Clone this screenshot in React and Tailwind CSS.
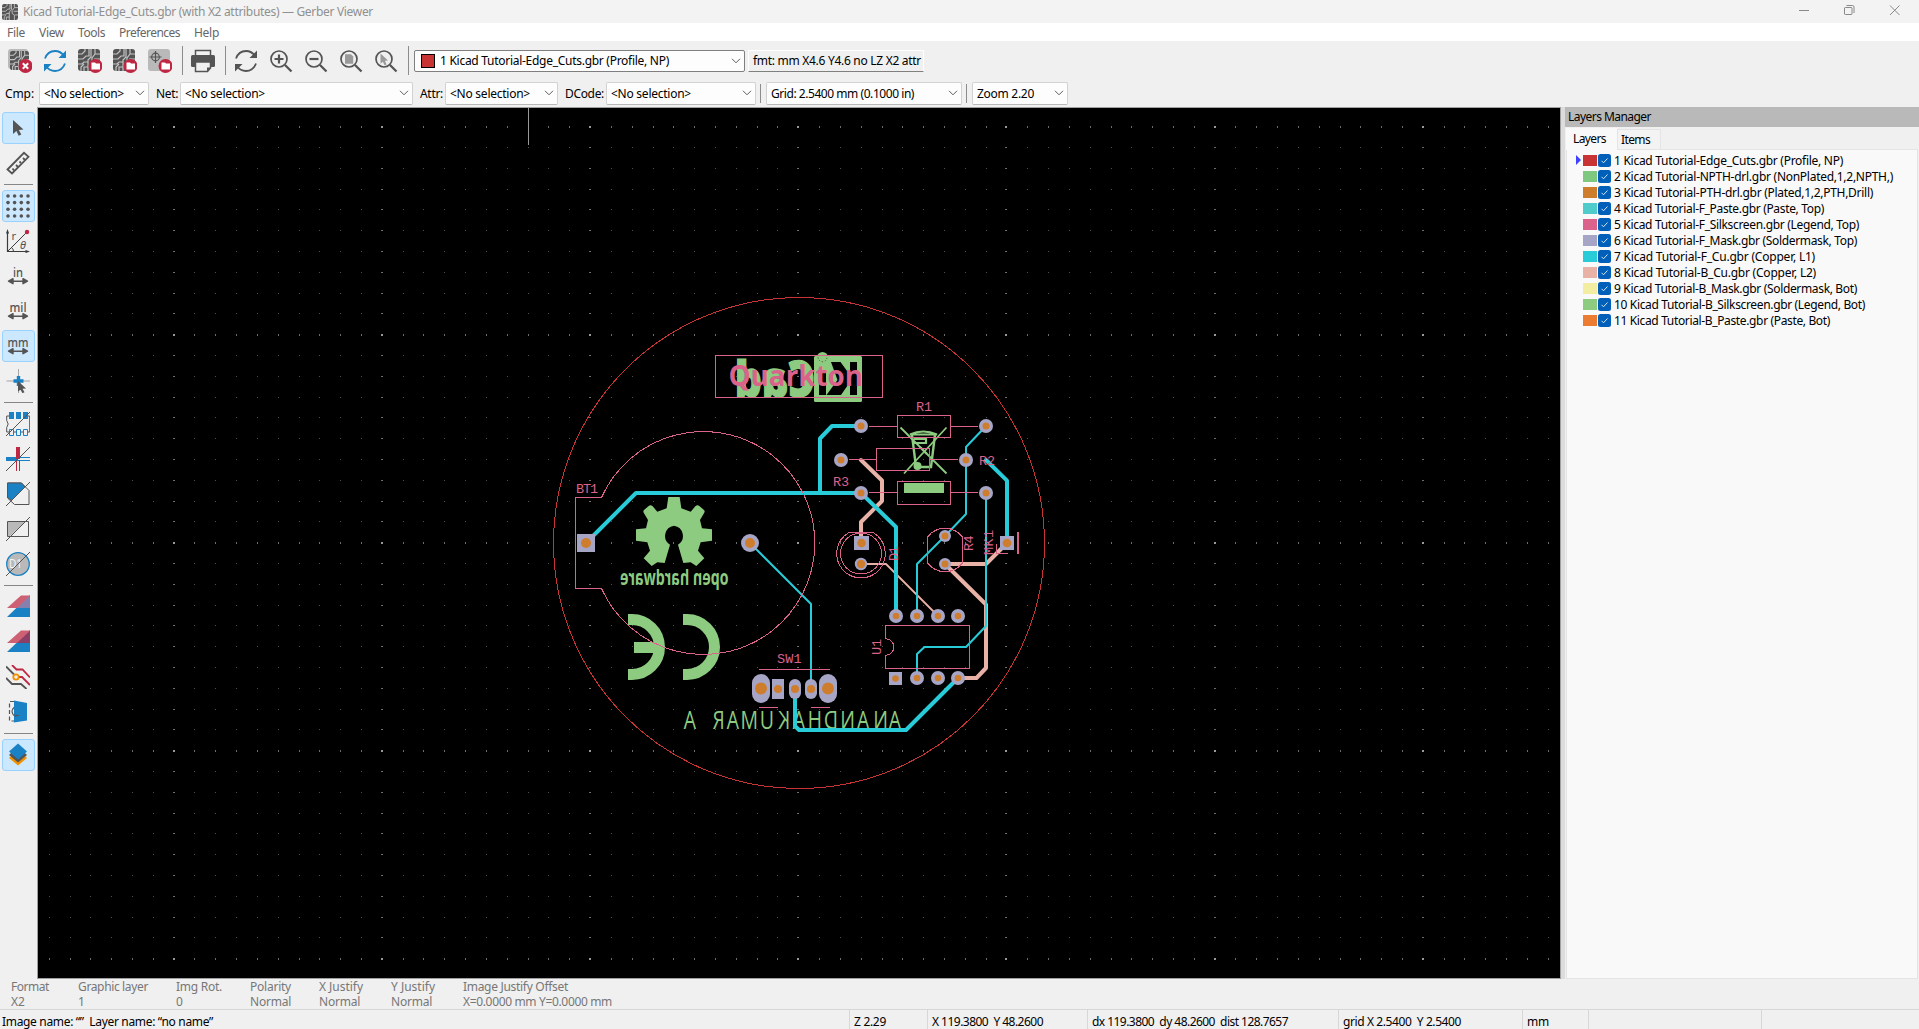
import React, { useLayoutEffect, useRef, useState } from 'react';

/* Text run spread to an exact advance width, like the native toolkit's hinted metrics. */
function Fit({ w, children, className = '' }) {
  const ref = useRef(null);
  const [ls, setLs] = useState(0);
  useLayoutEffect(() => {
    const el = ref.current;
    if (!w || !el) return;
    const natural = el.getBoundingClientRect().width - ls * children.length;
    setLs((w - natural) / children.length);
  }, [w, children]);
  return (
    <span ref={ref} className={`inline-block whitespace-pre ${className}`} style={{ letterSpacing: `${ls}px` }}>
      {children}
    </span>
  );
}

const DARK = '#545454';
const BLUE = '#1a81c4';
const RED = '#bf2641';

const BoardChip = ({ x = 0, y = 0, s = 22 }) => (
  <g transform={`translate(${x} ${y}) scale(${s / 22})`}>
    <rect width="22" height="22" rx="3" fill={DARK} />
    <path d="M0 5h4l3-3V0M0 10h5l3-3h3V0M13 0v8l-3 3v11M0 15h4l2-2h4M3 22v-4l3-3M17 0v5M22 5h-5l-3 4v4l3 2v7M22 10h-6M22 15h-4M6 22v-4h4" stroke="#c4c4c4" strokeWidth="1.2" fill="none" />
  </g>
);
const Badge = ({ children }) => (
  <g>
    <circle cx="17.5" cy="17" r="7" fill={RED} />
    {children}
  </g>
);
const FolderMark = () => <path d="M13.500 13.500h3.500l1 1h4v6h-8.500z" fill="#fff" />;
const Lens = ({ children }) => (
  <g>
    <circle cx="10" cy="10" r="8" fill="none" stroke={DARK} strokeWidth="1.7" />
    <path d="M16 16l6.5 6.5" stroke={DARK} strokeWidth="2.3" />
    {children}
  </g>
);
const Cycle = ({ c }) => (
  <g fill="none" stroke={c} strokeWidth="1.8">
    <path d="M2 9.5C4 4 8 2 12 2c4 0 7 2 9 5M22 14.500c-2 5.500-6 7.500-10 7.500-4 0-7-2-9-5" />
    <path d="M23 1.500v7.500h-7.500zM1 22.500v-7.500h7.500z" fill={c} stroke="none" />
  </g>
);

const topIcons = {
  clear: (
    <g>
      <rect x="0" y="0" width="20" height="20" rx="3" fill="#b9b9b9" />
      <BoardChip x={2} y={2} s={19} />
      <Badge><path d="M14.800 14.300l5.400 5.400M20.200 14.300l-5.400 5.400" stroke="#fff" strokeWidth="2" /></Badge>
    </g>
  ),
  reload: <Cycle c={BLUE} />,
  openAuto: <g><BoardChip /><Badge><FolderMark /></Badge></g>,
  openGerber: <g><BoardChip /><Badge><FolderMark /></Badge></g>,
  openDrill: (
    <g>
      <rect width="22" height="22" rx="3" fill="#b9b9b9" />
      <circle cx="7.500" cy="8" r="3.800" fill="none" stroke={DARK} strokeWidth="1.200" />
      <path d="M7.500 2v12M1.500 8h12" stroke={DARK} strokeWidth="1.200" />
      <Badge><FolderMark /></Badge>
    </g>
  ),
  print: (
    <g>
      <path d="M4.500 6V1.500h15V6" fill="#f0f0f0" stroke={DARK} strokeWidth="1.500" />
      <rect x="0" y="6" width="24" height="12" rx="1.500" fill={DARK} />
      <path d="M4.500 13h15v6l-3 3.500h-12z" fill="#f0f0f0" stroke={DARK} strokeWidth="1.500" />
      <path d="M16 22.500v-4h4z" fill={DARK} />
    </g>
  ),
  refresh: <Cycle c={DARK} />,
  zoomIn: <Lens><path d="M10 5.500v9M5.500 10h9" stroke={DARK} strokeWidth="2.200" /></Lens>,
  zoomOut: <Lens><path d="M5.500 10h9" stroke={DARK} strokeWidth="2.200" /></Lens>,
  zoomFit: <Lens><path d="M6 5.200h6l2.200 2.200v7.400H6z" fill="#9a9a9a" /></Lens>,
  zoomSel: <Lens><path d="M6.500 4.500l7.500 7-3 .3 1.500 3.600-2 .8-1.600-3.500-2.400 2z" fill="#9a9a9a" /></Lens>,
};

const ToolIcon = ({ name }) => (
  <svg className="block h-6 w-6 shrink-0" viewBox="0 0 24 24">{topIcons[name]}</svg>
);
const VSep = ({ className = '' }) => <div className={`w-px shrink-0 bg-[#8c8c8c] ${className}`} />;

const Arrows = () => <path d="M4 17.200h16M7 14.700l-4.500 2.500 4.500 2.500zM17 14.700l4.500 2.500-4.500 2.500z" stroke={DARK} strokeWidth="1.400" fill={DARK} strokeLinejoin="round" />;
const Unit = ({ t, w }) => (
  <g>
    <text x="12" y="12.500" textAnchor="middle" textLength={w} lengthAdjust="spacingAndGlyphs" fontSize="12.500" fontWeight="500" fill={DARK} fontFamily="'Noto Sans'">{t}</text>
    <Arrows />
  </g>
);
const Slash = () => <path d="M0 24L24 0" stroke={DARK} strokeWidth="1" />;

const sideIcons = {
  select: <path d="M7 4l10.500 9.600-4.600.3 2.400 4.600-2.600 1.300-2.300-4.800L7 18z" fill={DARK} />,
  ruler: (
    <g fill="none" stroke={DARK} strokeWidth="1.800">
      <path d="M1.500 18.500L18 1.800l4.500 4L6 22.500z" />
      <path d="M6.500 17.500l1.500 1.800M10 14l2 2M13.500 10.500l1.500 1.500M17 7l2 2" />
    </g>
  ),
  grid: (
    <g fill={DARK}>
      {[2, 8.600, 15.300, 22].map((y) => [2, 8.600, 15.300, 22].map((x) => <circle key={`${x}-${y}`} cx={x} cy={y} r="1.800" />))}
    </g>
  ),
  polar: (
    <g stroke="#3c3c3c" fill="none">
      <path d="M1.500 3v19.500H21" strokeWidth="1.200" />
      <path d="M1.500 0l1.600 4.500H0zM24 22.500l-4.500-1.600v3.200z" fill="#3c3c3c" stroke="none" />
      <path d="M2 22L20 4M5.500 18.500q2 1.500 2 4" strokeWidth="1" />
      <circle cx="21" cy="3" r="2.200" fill={RED} stroke="none" />
      <text x="5.500" y="11" fontSize="11" fill={DARK} stroke="none" fontFamily="'Noto Sans'">r</text>
      <text x="14" y="20" fontSize="11" fontStyle="italic" fill={DARK} stroke="none" fontFamily="'Noto Sans'">θ</text>
    </g>
  ),
  inch: <Unit t="in" w={10} />,
  mil: <Unit t="mil" w={17} />,
  mm: <Unit t="mm" w={21} />,
  cursor: (
    <g>
      <path d="M12.500 0v24M.500 12H24" stroke="#a5a5a5" />
      <path d="M12.500 7v10M7.500 12h10" stroke={BLUE} strokeWidth="3.400" />
      <path d="M12 12l8 7.500-3.500.2 2 3.500-2 1-2-3.500L12 22.500z" fill={DARK} />
    </g>
  ),
  pads: (
    <g>
      <path d="M3 4H.700v4.500q3 3.500 0 7V20h23V4H21" fill="none" stroke={DARK} />
      <path d="M3 0h5v7H3zM10 0h5v7h-5zM17 0h5v7h-5z" fill={BLUE} />
      <path d="M3.500 17.500h4v6h-4zM10.500 17.500h4v6h-4zM17.500 17.500h4v6h-4z" fill="#f0f0f0" stroke={BLUE} />
      <Slash />
    </g>
  ),
  lines: (
    <g>
      <path d="M0 12h12" stroke={BLUE} strokeWidth="4" />
      <path d="M12 10.500h12M12 13.500h12" stroke={BLUE} />
      <path d="M12 0v12" stroke={RED} strokeWidth="4" />
      <path d="M10.500 13v11M13.500 13v11" stroke={RED} />
      <Slash />
    </g>
  ),
  polys: (
    <g>
      <path d="M1.500 1h14L23 8.500v14H8.500L1.500 16z" fill="#f0f0f0" stroke={DARK} />
      <path d="M1.500 1h14l3.500 4L5.500 18.500l-4-3z" fill={BLUE} stroke={DARK} />
      <Slash />
    </g>
  ),
  neg: (
    <g>
      <path d="M1.500 4.500h21v15h-21z" fill="#f0f0f0" stroke={DARK} />
      <path d="M2 5h17L4 19H2z" fill="#b9b9b9" />
      <Slash />
    </g>
  ),
  dcodes: (
    <g>
      <circle cx="12" cy="12" r="11.300" fill="#b9b9b9" stroke={BLUE} strokeWidth="1.300" />
      <text x="3" y="16" fontSize="13" textLength="13" lengthAdjust="spacingAndGlyphs" fill="#f4f4f4" fontFamily="'Noto Sans'">D1</text>
      <Slash />
    </g>
  ),
  diff: (
    <g>
      <path d="M1 22L24 0v22z" fill={BLUE} />
      <path d="M1 13L15 .500h9V13z" fill="#cd6173" />
      <path d="M11 13L24 .800V13z" fill="#8580ad" />
    </g>
  ),
  xor: (
    <g>
      <path d="M1 22L24 0v22z" fill={BLUE} />
      <path d="M1 13L15 .500h9V13z" fill="#cd6173" />
      <path d="M11 13L24 .800V13z" fill="#8b3f66" />
    </g>
  ),
  contrast: (
    <g fill="none" strokeWidth="1.800">
      <path d="M0 1.500l8 8M0 13l6 6h9l5.500 5" stroke={DARK} />
      <path d="M6 0l4.500 4.500h6L24 12.500M12 12h4l8 8" stroke={RED} />
      <circle cx="10" cy="12" r="2.700" stroke="#f29100" fill="#f0f0f0" />
    </g>
  ),
  flip: (
    <g>
      <path d="M8 1.500H3.500v19.500H8" fill="none" stroke={DARK} strokeWidth="1.200" strokeDasharray="4 2.500" />
      <path d="M8.500 7q-5 4.500 0 9" fill="none" stroke={DARK} strokeWidth="1.200" />
      <path d="M8 .500l13 2.500v17.500L8 22.500z" fill={BLUE} />
      <path d="M8 14.500l6 .8-5 1.500z" fill={DARK} />
    </g>
  ),
  layers: (
    <g>
      <path d="M12 6.500l9 8.500-9 7.500L3 15z" fill="#f29100" />
      <path d="M12 3.500l9 8.500-9 7.500L3 12z" fill={DARK} />
      <path d="M12 .500l9 8-9 8-9-8z" fill={BLUE} />
    </g>
  ),
};

const sideTools = [
  ['select', true], ['ruler'], null,
  ['grid', true], ['polar'], ['inch'], ['mil'], ['mm', true], ['cursor'], null,
  ['pads'], ['lines'], ['polys'], ['neg'], ['dcodes'], null,
  ['diff'], ['xor'], ['contrast'], ['flip'], null,
  ['layers', true],
];

function SideBar() {
  return (
    <div className="flex w-[37px] shrink-0 flex-col pt-[4px] pl-[2px]">
      {sideTools.map((t, i) =>
        t ? (
          <div key={i} className="h-[35px] shrink-0 pt-px">
            <div className={`flex h-8 w-[33px] items-center rounded-[3px] border pl-[3px] ${t[1] ? 'border-[#99d1ff] bg-[#cce8ff]' : 'border-transparent'}`}>
              <svg className="block h-6 w-6" viewBox="0 0 24 24">{sideIcons[t[0]]}</svg>
            </div>
          </div>
        ) : (
          <div key={i} className="h-2 shrink-0 pt-[3px] pl-[2px]"><div className="h-px w-[29px] bg-[#868686]" /></div>
        )
      )}
    </div>
  );
}

function Combo({ w, tw, children, swatch }) {
  return (
    <div className={`flex shrink-0 items-center rounded-[2px] border bg-[#fdfdfd] pl-[4px] pr-[3px] ${swatch ? 'h-[22px] border-[#7f7f7f]' : 'h-[23px] border-[#d2d2d2] border-b-[#b8b8b8]'}`} style={{ width: w }}>
      {swatch && <div className="mr-[5px] ml-[2px] h-[14px] w-[14px] border border-black bg-[#c83434]" />}
      <Fit w={tw}>{children}</Fit>
      <svg className="ml-auto h-[6px] w-[10px]" viewBox="0 0 10 6"><path d="M1 .800l4 4 4-4" fill="none" stroke="#5c5c5c" /></svg>
    </div>
  );
}

const layers = [
  ['#c83434', '1 Kicad Tutorial-Edge_Cuts.gbr (Profile, NP)', 229],
  ['#7fc87f', '2 Kicad Tutorial-NPTH-drl.gbr (NonPlated,1,2,NPTH,)', 279],
  ['#ce7d2c', '3 Kicad Tutorial-PTH-drl.gbr (Plated,1,2,PTH,Drill)', 259],
  ['#4fcbcb', '4 Kicad Tutorial-F_Paste.gbr (Paste, Top)', 210],
  ['#db628b', '5 Kicad Tutorial-F_Silkscreen.gbr (Legend, Top)', 245],
  ['#a7a5c6', '6 Kicad Tutorial-F_Mask.gbr (Soldermask, Top)', 243],
  ['#28ccd9', '7 Kicad Tutorial-F_Cu.gbr (Copper, L1)', 201],
  ['#e8b2a7', '8 Kicad Tutorial-B_Cu.gbr (Copper, L2)', 202],
  ['#f2eda1', '9 Kicad Tutorial-B_Mask.gbr (Soldermask, Bot)', 243],
  ['#8dcb81', '10 Kicad Tutorial-B_Silkscreen.gbr (Legend, Bot)', 251],
  ['#ed7c33', '11 Kicad Tutorial-B_Paste.gbr (Paste, Bot)', 216],
];

function LayersPanel() {
  return (
    <div className="flex w-[355px] shrink-0 flex-col">
      <div className="flex h-5 items-center bg-[#b9b9b9] pb-[2px] pl-[3px]"><Fit w={83}>Layers Manager</Fit></div>
      <div className="flex h-[22px] items-end pl-px">
        <div className="z-10 -mb-px flex h-[22px] w-[51px] items-center bg-[#f9f9f9] pb-[2px] pl-[7px]"><Fit w={33}>Layers</Fit></div>
        <div className="flex h-5 w-[44px] items-center border border-b-0 border-[#e4e4e4] bg-[#f3f3f3] pl-[3px]"><Fit w={29}>Items</Fit></div>
      </div>
      <div className="mr-[2px] ml-px flex-1 border border-[#e4e4e4] bg-[#f9f9f9] pt-[2px] pl-[9px]">
        {layers.map(([c, name, w], i) => (
          <div key={name} className="flex h-4 items-center">
            <svg className="mr-[2px] h-[10px] w-[5px]" viewBox="0 0 5 10">{i === 0 && <path d="M0 0l5 5-5 5z" fill="#4040ff" />}</svg>
            <div className="h-[11px] w-[14px]" style={{ backgroundColor: c }} />
            <svg className="ml-px h-[13px] w-[13px]" viewBox="0 0 13 13"><rect width="13" height="13" rx="2.500" fill="#005fb8" /><path d="M3.500 6.800l2 2 4-4.300" fill="none" stroke="#d5e6f5" strokeWidth="1" /></svg>
            <Fit w={w} className="ml-[3px]">{name}</Fit>
          </div>
        ))}
      </div>
    </div>
  );
}

/* Grid points: every tenth row and column is emphasised. */
function buildGrid() {
  let minor = '', mid = '', major = '';
  for (let i = -6; i <= 66; i++) {
    const x = Math.floor(174.150 + 20.820 * i);
    for (let j = 0; j <= 40; j++) {
      const y = Math.floor(126.600 + 20.800 * j);
      const mx = i % 10 === 0, my = j % 10 === 0;
      if (mx && my) major += `M${x - 1} ${y}h2v2h-2z`;
      else if (mx) mid += `M${x - 1} ${y}h2v1h-2z`;
      else if (my) mid += `M${x} ${y}h1v2h-1z`;
      else minor += `M${x} ${y}h1v1h-1z`;
    }
  }
  return { minor, mid, major };
}
const gridPaths = buildGrid();

const CU = '#28ccd9', BCU = '#e8b2a7', MASK = '#a7a5c6', SILK = '#db628b', BSILK = '#8dcb81', DRILL = '#ce7d2c';

const roundPads = [
  [750, 543, 9, 5], [861, 426, 7, 3.500], [986, 426, 7, 3.500], [841, 460, 7, 3.500], [966, 460, 7, 3.500],
  [861, 493, 7, 3.500], [986, 493, 7, 3.500], [861, 564, 6.200, 4.200], [945, 536, 6, 3.500], [945, 564, 6, 3.500],
  [896, 616, 7, 3.300], [917, 616, 7, 3.300], [938, 616, 7, 3.300], [958, 616, 7, 3.300],
  [917, 678, 7, 3.300], [938, 678, 7, 3.300], [958, 678, 7, 3.300],
];
const boxPads = [
  [577, 534, 18, 18, 0, 5], [854, 536, 15, 14, 0, 4.300], [1000, 536, 14, 14, 0, 4.300], [889, 672, 13, 13, 0, 3.300],
  [752, 674, 18, 29, 9, 6], [772, 679, 12, 20, 0, 4], [789, 679, 12, 20, 6, 4], [805, 679, 12, 20, 6, 4], [819, 674, 18, 29, 9, 6],
];

const Label = ({ x, y, w, rot, children }) => (
  <text transform={rot ? `translate(${x} ${y}) rotate(-90)` : `translate(${x} ${y})`} textLength={w} fontSize="13.500" fill={SILK} fontFamily="'Liberation Mono', monospace">{children}</text>
);

/* Stroke-font legend: [glyph, distance from the right-hand origin] */
const SIGN_SCALE = 0.78;
const signGlyphs = [
  ['A', 0], ['N', 13], ['A', 31.700], ['N', 46], ['D', 63], ['H', 79], ['A', 96], ['K', 110.700], ['U', 127],
  ['M', 143], ['A', 162], ['R', 176.300], [' ', 190], ['A', 205],
];

const gearHalf = 'M0 -114H-17L-22 -80L-50 -70L-64 -86Q-70 -92 -76 -87L-90 -75Q-94 -71 -90 -65L-78 -45L-84 -20L-114 -17V17L-80 22L-72 47L-91 70L-67 93L-50 82L-28 84L-12 29A31 31 0 0 1 0 -28Z';

function BoardView() {
  return (
    <svg className="block h-[870px] w-[1522px]" viewBox="38 108 1522 870">
      <rect x="38" y="108" width="1522" height="870" fill="#000" />
      <g shapeRendering="crispEdges">
        <path d={gridPaths.minor} fill="#505050" />
        <path d={gridPaths.mid} fill="#6e6e6e" />
        <path d={gridPaths.major} fill="#999" />
        <path d="M528 108h1v37h-1z" fill="#999" />
      </g>

      {/* bottom silkscreen */}
      <g fill={BSILK}>
        <rect x="814" y="356" width="48" height="46" rx="1.500" />
        <circle cx="822.500" cy="357.500" r="5.500" />
        <path d="M818 357.500q1 4 4.500 4.200t4.500-4.200" fill="none" stroke="#33492f" strokeDasharray="1 2" />
        <path d="M819 370h7v25h-7zM850 362h7v33h-7zM831 362h9.500l9.500 13v7l-9 13h-14.500l11-15z" fill="#000" />
        <text transform="translate(815 396.500) scale(-1 1)" fontSize="49" fontWeight="800" fontFamily="'Open Sans'" textLength="80" lengthAdjust="spacingAndGlyphs" stroke={BSILK} strokeWidth="1.500">Cad</text>
        <g transform="translate(674 535) scale(.3333)">
          <path d={gearHalf} />
          <path d={gearHalf} transform="scale(-1 1)" />
        </g>
        <text transform="translate(728.500 585) scale(-1 1)" fontSize="20.500" fontWeight="700" fontFamily="'Open Sans'" textLength="108.500" lengthAdjust="spacingAndGlyphs">open hardware</text>
        <g fill="none" stroke={BSILK} strokeWidth="11">
          <path d="M628 619.500h4a27.500 27.500 0 0 1 0 55h-4M634 647.500h24M683 619.500h4a27.500 27.500 0 0 1 0 55h-4" />
        </g>
        <text transform={`translate(901 729) scale(-${SIGN_SCALE} 1)`} x={signGlyphs.map(([, u]) => (u / SIGN_SCALE).toFixed(1)).join(' ')} fontSize="25" fontFamily="'Open Sans'" xmlSpace="preserve">{signGlyphs.map(([c]) => c).join('')}</text>
        <rect x="904" y="483" width="40" height="10" />
        <g fill="none" stroke={BSILK} strokeWidth="1.800">
          <path d="M900.500 427.500l46 46M946.500 427.500l-42.500 46" />
          <path d="M912 435l4 32h15l4-32" strokeWidth="2.400" />
          <path d="M910 434.500q13-6 27 0zM913 443h13v-4h-12M920 447l7 7" strokeWidth="2.200" />
        </g>
        <circle cx="917.500" cy="466" r="4" />
      </g>

      {/* bottom copper */}
      <g fill="none" stroke={BCU} strokeWidth="4" strokeLinejoin="round" strokeLinecap="round">
        <path d="M861 460l21 20.500V501l-21 21v21M945 564l41 40.500V668l-9.500 10H958M945 564h41l21-21" />
        <path d="M861 564h25l52 52" strokeWidth="1.800" />
      </g>

      {/* top copper */}
      <g fill="none" stroke={CU} strokeWidth="4" strokeLinejoin="round" strokeLinecap="round">
        <path d="M586 543l50-50h225l35 34v89M820 493v-54.500L832 426h29M986 460l21 20.700V543M795 688v38l4 4h107l52-52" />
        <path d="M986 426l-20 21v67l-21 22-28 28v52M986 493v133l-20 21h-41.500l-7.500 7v24M750 543l61 61v84" strokeWidth="2" />
      </g>

      {/* pads */}
      <g fill={MASK}>
        {roundPads.map(([x, y, r]) => <circle key={`${x}-${y}`} cx={x} cy={y} r={r} />)}
        {boxPads.map(([x, y, w, h, r]) => <rect key={`${x}-${y}`} x={x} y={y} width={w} height={h} rx={r} />)}
      </g>

      {/* top silkscreen */}
      <g fill="none" stroke={SILK} strokeWidth="1" shapeRendering="crispEdges">
        <path d="M601.500 497.500h-26v91h26A111.500 111.500 0 1 0 601.500 497.500" />
        <path d="M715.500 355.500h167v42h-167zM897.500 415.500h53v22h-53zM876.500 448.500h53v22h-53zM897.500 481.500h53v23h-53z" />
        <path d="M869 426.500h28M951 426.500h27M849 459.500h27M930 459.500h28M869 492.500h28M951 492.500h27" />
        <circle cx="861" cy="553.500" r="20.500" />
        <path d="M849 532.500h24A24.300 24.300 0 1 1 849 532.500" />
        <path d="M927.500 537A22 22 0 0 1 962.500 537v26A22 22 0 0 1 927.500 563z" />
        <path d="M996.500 544v9.500H1008" />
        <path d="M1018 532v21.500" strokeWidth="2" />
        <path d="M885.500 638.700v-13.200h84v43h-84v-13.200a8.300 8.300 0 0 0 0-16.600" />
        <path d="M759 669.500h71M759 707.500h19M810.500 707.500h19" />
      </g>
      <Label x={916} y={411} w={16}>R1</Label>
      <Label x={979} y={464.500} w={16}>R2</Label>
      <Label x={833} y={485.500} w={16}>R3</Label>
      <Label x={576} y={493} w={22}>BT1</Label>
      <Label x={777} y={663} w={24.500}>SW1</Label>
      <Label x={898} y={561} w={15} rot>D1</Label>
      <Label x={973} y={551} w={15.500} rot>R4</Label>
      <Label x={993} y={555} w={25} rot>MK1</Label>
      <Label x={881} y={655} w={16} rot>U1</Label>
      <text x="728.500" y="385.500" fontSize="29" fontWeight="700" fill={SILK} fontFamily="'Open Sans'" textLength="134.500" lengthAdjust="spacingAndGlyphs">Quarkton</text>

      <g fill={DRILL}>
        {roundPads.map(([x, y, , d]) => <circle key={`${x}-${y}`} cx={x} cy={y} r={d} />)}
        {boxPads.map(([x, y, w, h, , d]) => <circle key={`${x}-${y}`} cx={x + w / 2} cy={y + h / 2} r={d} />)}
      </g>
      <circle cx="799" cy="543" r="245.500" fill="none" stroke="#c83434" strokeWidth="1" shapeRendering="crispEdges" />
    </svg>
  );
}

const info = [
  ['Format', 38, 'X2', 14, 67], ['Graphic layer', 70, '1', 6, 98], ['Img Rot.', 46, '0', 7, 74], ['Polarity', 41, 'Normal', 41, 69],
  ['X Justify', 44, 'Normal', 41, 72], ['Y Justify', 44, 'Normal', 41, 72], ['Image Justify Offset', 105, 'X=0.0000 mm Y=0.0000 mm', 149, 200],
];
const status = [
  ['Z 2.29', 32, 78], ['X 119.3800  Y 48.2600', 111, 160], ['dx 119.3800  dy 48.2600  dist 128.7657', 196, 251],
  ['grid X 2.5400  Y 2.5400', 118, 184], ['mm', 22, 66], ['', 0, 173], ['', 0, 157],
];

export default function App() {
  return (
    <div className="flex h-[1029px] w-[1919px] flex-col overflow-hidden bg-[#f0f0f0] font-['Noto_Sans',sans-serif] text-[12px] leading-[15px] text-black">
      <div className="flex h-[23px] shrink-0 items-center bg-[#f3f3f3] pl-[2px] text-[#909090]">
        <svg className="mr-[5px] h-4 w-4" viewBox="0 0 22 22"><BoardChip /></svg>
        <Fit w={350}>Kicad Tutorial-Edge_Cuts.gbr (with X2 attributes) — Gerber Viewer</Fit>
        <svg className="ml-auto h-[23px] w-[140px]" viewBox="0 0 140 23" fill="none" stroke="#8a8a8a">
          <path d="M20 10.500h10M111 5.500l9.500 9.500M120.500 5.500L111 15" />
          <path d="M66.500 7.500h6q.5 0 .5.500v6q0 .5-.5.500h-6q-1 0-1-.5v-6q0-.5 1-.5zM67.500 5.500h6q1.500 0 1.500 1.500v6" />
        </svg>
      </div>
      <div className="flex h-[18px] shrink-0 items-center gap-[14px] bg-white pl-[7px] text-[#666]">
        <Fit w={18}>File</Fit><Fit w={25}>View</Fit><Fit w={27}>Tools</Fit><Fit w={61}>Preferences</Fit><Fit w={25}>Help</Fit>
      </div>

      <div className="flex h-[39px] shrink-0 items-center pl-[8px]">
        <div className="flex items-center gap-[11px]">
          {['clear', 'reload', 'openAuto', 'openGerber', 'openDrill'].map((n) => <ToolIcon key={n} name={n} />)}
        </div>
        <VSep className="ml-[10px] mr-[8px] h-[29px]" />
        <ToolIcon name="print" />
        <VSep className="ml-[10px] mr-[8px] h-[29px]" />
        <div className="flex items-center gap-[11px]">
          {['refresh', 'zoomIn', 'zoomOut', 'zoomFit', 'zoomSel'].map((n) => <ToolIcon key={n} name={n} />)}
        </div>
        <VSep className="ml-[10px] mr-[5px] h-[29px]" />
        <Combo w={331} tw={229} swatch>1 Kicad Tutorial-Edge_Cuts.gbr (Profile, NP)</Combo>
        <div className="ml-[3px] flex h-[22px] w-[176px] items-center border border-white border-b-[#808080] pl-[4px]"><Fit w={168}>fmt: mm X4.6 Y4.6 no LZ X2 attr</Fit></div>
      </div>
      <div className="flex h-[27px] shrink-0 items-center pb-[1px] pl-[5px]">
        <div className="w-[34px]"><Fit w={29}>Cmp:</Fit></div>
        <Combo w={110} tw={80}>{'<No selection>'}</Combo>
        <div className="w-[31px] pl-[7px]"><Fit w={22}>Net:</Fit></div>
        <Combo w={233} tw={80}>{'<No selection>'}</Combo>
        <div className="w-[32px] pl-[7px]"><Fit w={23}>Attr:</Fit></div>
        <Combo w={113} tw={80}>{'<No selection>'}</Combo>
        <div className="w-[48px] pl-[7px]"><Fit w={39}>DCode:</Fit></div>
        <Combo w={150} tw={80}>{'<No selection>'}</Combo>
        <VSep className="ml-[4px] mr-[5px] h-[19px]" />
        <Combo w={196} tw={143}>Grid: 2.5400 mm (0.1000 in)</Combo>
        <VSep className="ml-[4px] mr-[5px] h-[19px]" />
        <Combo w={96} tw={57}>Zoom 2.20</Combo>
      </div>

      <div className="flex h-[872px] shrink-0">
        <SideBar />
        <div className="w-[1524px] shrink-0 border border-[#a0a0a0]"><BoardView /></div>
        <div className="w-[4px] shrink-0 bg-[#dcdcdc]" />
        <LayersPanel />
      </div>

      <div className="flex h-[30px] shrink-0 pl-[11px] text-[#777]">
        {info.map(([a, wa, b, wb, w]) => (
          <div key={a} className="shrink-0" style={{ width: w }}>
            <div className="h-[15px]"><Fit w={wa}>{a}</Fit></div>
            <div className="h-[15px]"><Fit w={wb}>{b}</Fit></div>
          </div>
        ))}
      </div>
      <div className="flex h-5 shrink-0 items-center border-t border-[#d7d7d7]">
        <div className="w-[849px] shrink-0 pt-[4px] pl-[2px]"><Fit w={211}>{'Image name: “”  Layer name: “no name”'}</Fit></div>
        {status.map(([t, w, fw], i) => (
          <div key={i} className="flex h-full shrink-0 items-center border-l border-[#d7d7d7] pt-[4px] pl-[4px]" style={{ width: fw }}>
            {t && <Fit w={w}>{t}</Fit>}
          </div>
        ))}
      </div>
    </div>
  );
}
